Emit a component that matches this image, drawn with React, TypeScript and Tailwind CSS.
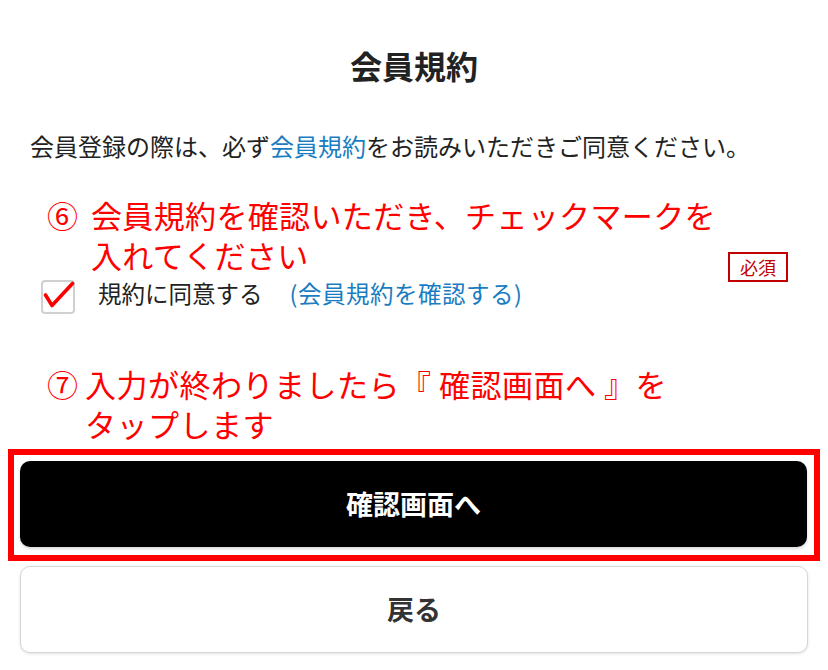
import React from 'react';

const jp = { fontFamily: '"Noto Sans CJK JP", "Noto Sans", sans-serif' };

function Annotation({ num, lines, indent, track }: { num: string; lines: string[]; indent: string; track: string }) {
  return (
    <div className="flex text-[31px] leading-[40px] text-[#ff0000] pl-[27px]">
      <span className={indent}>{num}</span>
      <div className={`flex flex-col ${track}`}>
        {lines.map((l, i) => (
          <span key={i} className="whitespace-pre">{l}</span>
        ))}
      </div>
    </div>
  );
}

export default function App() {
  return (
    <div style={jp} className="w-[828px] h-[670px] bg-white text-[#222] px-[20px] pt-[45px] overflow-hidden">
      <h1 className="text-center text-[32px] leading-[40px] font-bold text-[#222]">会員規約</h1>

      <p className="mt-[43px] pl-[10px] text-[24px] leading-[36px]">
        会員登録の際は、必ず<span className="text-[#1a7cc1]">会員規約</span>をお読みいただきご同意ください。
      </p>

      <div className="mt-[31px] flex items-end justify-between pr-[20px]">
        <Annotation num="⑥" indent="w-[44px]" track="tracking-[0.35px]" lines={['会員規約を確認いただき、チェックマークを', '入れてください']} />
        <span className="mb-[-7px] border-2 border-[#c00000] text-[#c00000] text-[18px] leading-[26px] w-[60px] text-center">
          必須
        </span>
      </div>

      <div className="mt-[4px] flex items-center h-[36px] pl-[21px]">
        <div className="relative w-[34px] h-[34px] rounded-[4px] border-2 border-[#d0d0d0] bg-white">
          <svg className="absolute left-[-2px] top-[-2px]" width="34" height="34" viewBox="0 0 34 34">
            <path d="M4.5 15 L11 25.5 L31.5 3.5" fill="none" stroke="#ff0000" strokeWidth="3.6" strokeLinecap="round" strokeLinejoin="round" />
          </svg>
        </div>
        <span className="ml-[23px] text-[23.5px] leading-[36px] -mt-[8px]">規約に同意する</span>
        <span className="ml-[27px] text-[23.5px] leading-[36px] -mt-[8px] text-[#1a7cc1] tracking-[0.5px]">(会員規約を確認する)</span>
      </div>

      <div className="mt-[49px]">
        <Annotation num="⑦" indent="w-[38px]" track="tracking-[0.5px]" lines={['入力が終わりましたら『 確認画面へ 』を', 'タップします']} />
      </div>

      <div className="mt-[5px] -mx-[12px] border-[6px] border-[#ff0000] pt-[6px] pb-[8px] pl-[6px] pr-[7px]">
        <button className="w-full h-[86px] rounded-[10px] bg-black text-white text-[27px] font-bold shadow-[0_2px_3px_rgba(0,0,0,0.15)]">
          確認画面へ
        </button>
      </div>

      <button className="mt-[5px] w-full h-[87px] rounded-[10px] bg-white border border-[#d6d6d6] text-[#333] text-[27px] font-bold shadow-[0_1px_3px_rgba(0,0,0,0.12)]">
        戻る
      </button>
    </div>
  );
}
